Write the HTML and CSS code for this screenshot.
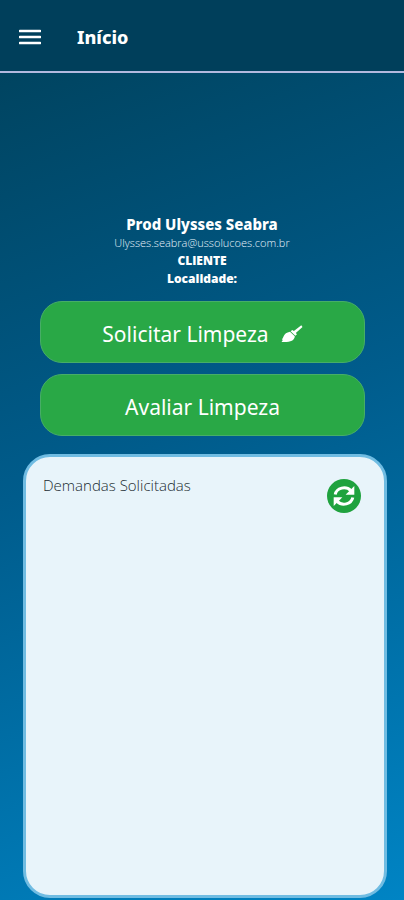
FILE: index.html
```html
<!DOCTYPE html>
<html lang="pt-BR">
<head>
<meta charset="utf-8">
<meta name="viewport" content="width=device-width, initial-scale=1">
<title>Início</title>
<link rel="stylesheet" href="styles.css">
</head>
<body>
<header class="topbar">
  <button class="menu" type="button" aria-label="Menu">
    <svg viewBox="0 0 22 16" width="22" height="16"><path d="M1 2h20M1 8h20M1 14h20" stroke="currentColor" stroke-width="2.600" stroke-linecap="round"/></svg>
  </button>
  <h1 class="title">Início</h1>
</header>
<main class="content">
  <section class="profile">
    <h2 class="name">Prod Ulysses Seabra</h2>
    <p class="email">Ulysses.seabra@ussolucoes.com.br</p>
    <p class="detail">CLIENTE</p>
    <p class="detail">Localidade:</p>
  </section>
  <div class="actions">
    <button class="action" type="button">Solicitar Limpeza
      <svg viewBox="0 0 22 18" width="22" height="18" fill="currentColor"><path d="M20.300.200 21.500 1.900 14.800 7.900 16 9.300 14.300 10.800 9.600 6.300 11.300 4.900 12.900 6z"/><path d="M9 6.700 13.800 11.200C13.500 15.800 8.500 17.600.5 17c.8-1 1.300-1.400 1.100-2.200L.8 14.300c2-.8.900-6.300 8.200-7.600z"/></svg>
    </button>
    <button class="action" type="button">Avaliar Limpeza</button>
  </div>
  <section class="card">
    <h2 class="card-title">Demandas Solicitadas</h2>
    <button class="refresh" type="button" aria-label="Atualizar">
      <svg viewBox="0 0 24 24" width="24" height="24"><g fill="none" stroke="currentColor" stroke-width="3"><path d="M3.200 10.500A9 8.200 0 0 1 18.800 6.600"/><path d="M20.800 13.500A9 8.200 0 0 1 5.200 17.400"/></g><path d="M22.300 2v8.700h-8.700z" fill="currentColor"/><path d="M1.700 22v-8.700h8.700z" fill="currentColor"/></svg>
    </button>
  </section>
</main>
</body>
</html>
```
FILE: styles.css
```css
* {
  box-sizing: border-box;
}

body {
  margin: 0;
  min-height: 100vh;
  display: flex;
  flex-direction: column;
  font-family: "Open Sans", "Noto Sans", sans-serif;
  color: #fff;
  background: linear-gradient(160deg, #004059 0%, #005c8c 48%, #0084c4 100%);
}

h1, h2, p {
  margin: 0;
}

button {
  border: 0;
  padding: 0;
  font: inherit;
  color: inherit;
  background: none;
}

svg {
  display: block;
}

.topbar {
  display: flex;
  align-items: center;
  gap: 36px;
  height: 73px;
  padding: 2px 19px 0;
  background: #003f5b;
  border-bottom: 2px solid #b3b9df;
}

.title {
  font: 800 18px/24px "Noto Sans", sans-serif;
}

.content {
  flex: 1;
  display: flex;
  flex-direction: column;
  padding: 141px 17px 2px 23px;
}

.profile {
  margin-right: 6px;
  text-align: center;
}

.name {
  font: 800 15px/20px "Noto Sans", sans-serif;
}

.email {
  font-size: 11px;
  font-weight: 300;
  line-height: 18px;
  color: #e6f2fb;
}

.detail {
  font-size: 12px;
  font-weight: 800;
  line-height: 18px;
}

.actions {
  display: grid;
  gap: 11px;
  margin: 13px 22px 18px 17px;
}

.action {
  display: flex;
  align-items: center;
  justify-content: center;
  gap: 12px;
  height: 62px;
  padding-top: 3px;
  font-family: "Noto Sans", sans-serif;
  font-size: 21px;
  background: #29a846;
  border: 1px solid #47ad67;
  border-radius: 22px;
}

.card {
  flex: 1;
  display: flex;
  justify-content: space-between;
  align-items: flex-start;
  padding: 18px 23px 18px 17px;
  color: #202a30;
  background: #e8f4fa;
  border: 3px solid #70bce2;
  border-radius: 27px;
}

.card-title {
  font-size: 15px;
  font-weight: 300;
  line-height: 20px;
}

.refresh {
  display: grid;
  place-items: center;
  width: 34px;
  height: 34px;
  margin-top: 4px;
  color: #fff;
  background: #1fa23e;
  border-radius: 50%;
}
```
